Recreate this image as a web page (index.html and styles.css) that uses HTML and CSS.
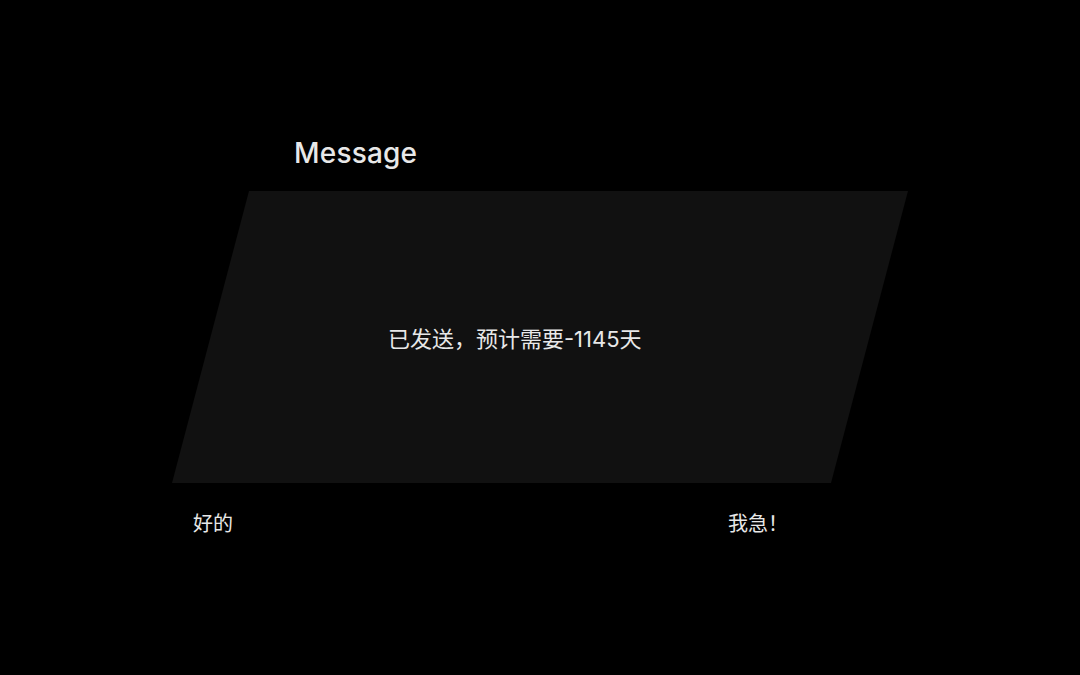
FILE: index.html
```html
<!DOCTYPE html>
<html lang="zh">
<head>
<meta charset="utf-8">
<title>Message</title>
<link rel="stylesheet" href="styles.css">
</head>
<body>
<div class="page">
  <div class="title">Message</div>
  <div class="card">
    <div class="msg">已发送，预计需要-1145天</div>
  </div>
  <div class="actions">
    <span class="btn">好的</span>
    <span class="btn">我急！</span>
  </div>
</div>
</body>
</html>
```
FILE: styles.css
```css
html, body {
  margin: 0;
  padding: 0;
  background: #000;
}
body {
  width: 1080px;
  height: 675px;
  overflow: hidden;
  color: #e8e8e8;
  font-family: Inter, "Noto Sans", "Noto Sans CJK SC", sans-serif;
}
.page {
  padding: 135px 0 0 172px;
  display: flex;
  flex-direction: column;
}
.title {
  margin-left: 122px;
  font-size: 28px;
  line-height: 36px;
  height: 36px;
  font-weight: 500;
  letter-spacing: 0.2px;
}
.card {
  margin-top: 20px;
  width: 736px;
  height: 292px;
  background: #111111;
  clip-path: polygon(77px 0, 100% 0, calc(100% - 77px) 100%, 0 100%);
  display: flex;
  align-items: center;
  padding-left: 216px;
  box-sizing: border-box;
}
.msg {
  font-size: 22px;
  line-height: 30px;
  margin-top: 4px;
  font-family: Inter, "Noto Sans CJK SC", sans-serif;
}
.actions {
  margin-top: 28px;
  width: 595px;
  padding-left: 21px;
  display: flex;
  justify-content: space-between;
}
.btn {
  font-size: 20px;
  line-height: 26px;
  font-family: Inter, "Noto Sans CJK SC", sans-serif;
}
```
